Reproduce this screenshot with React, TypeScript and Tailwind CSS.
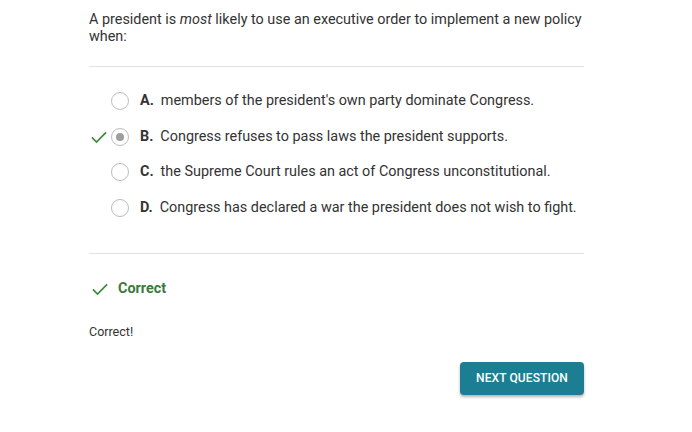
import React from "react";

const Check = ({ className = "" }: { className?: string }) => (
  <svg viewBox="0 0 24 24" className={className} fill="none" stroke="currentColor" strokeWidth="2" strokeLinecap="butt" strokeLinejoin="miter">
    <path d="M3.5 12.5l5.5 5.5L20.5 6.5" />
  </svg>
);

const options = [
  { l: "A.", t: "members of the president's own party dominate Congress." },
  { l: "B.", t: "Congress refuses to pass laws the president supports.", sel: true },
  { l: "C.", t: "the Supreme Court rules an act of Congress unconstitutional." },
  { l: "D.", t: "Congress has declared a war the president does not wish to fight." },
];

export default function App() {
  return (
    <div className="w-[692px] h-[432px] bg-white text-[#333] font-['Roboto',sans-serif]">
      <div className="ml-[89px] w-[495px] pt-[11px]">
        <p className="text-[14.4px] leading-[17px] text-[#333]">
          A president is <em>most</em> likely to use an executive order to implement a new policy when:
        </p>
        <div className="mt-[21px] border-t border-[#e3e3e3]" />
        <div className="pt-[16px] pb-[27px] flex flex-col">
          {options.map((o) => (
            <div key={o.l} className="h-[35.7px] flex items-center">
              <div className="w-[22px] flex items-center">
                {o.sel && <Check className="w-[20px] h-[20px] text-[#3c8a3c]" />}
              </div>
              <div className="w-[18px] h-[18px] rounded-full border border-[#bdbdbd] flex items-center justify-center shrink-0">
                {o.sel && <div className="w-[8px] h-[8px] rounded-full bg-[#9e9e9e]" />}
              </div>
              <span className="ml-[11px] text-[14.4px] font-bold text-[#333]">{o.l}</span>
              <span className="ml-[7px] text-[14.4px] text-[#333]">{o.t}</span>
            </div>
          ))}
        </div>
        <div className="border-t border-[#e3e3e3]" />
        <div className="mt-[24px] h-[22px] flex items-center">
          <Check className="w-[20px] h-[20px] text-[#3c8a3c] ml-[1px]" />
          <span className="ml-[8px] text-[14.4px] font-bold text-[#3a7a3a]">Correct</span>
        </div>
        <p className="mt-[24px] text-[12.5px] leading-[15px] text-[#333]">Correct!</p>
        <div className="mt-[23px] flex justify-end">
          <button className="w-[124px] h-[33px] rounded-[4px] bg-[#1b7e92] text-white text-[12px] font-medium tracking-[0.1px] shadow-[0_2px_3px_rgba(0,0,0,0.3)]">
            NEXT QUESTION
          </button>
        </div>
      </div>
    </div>
  );
}
